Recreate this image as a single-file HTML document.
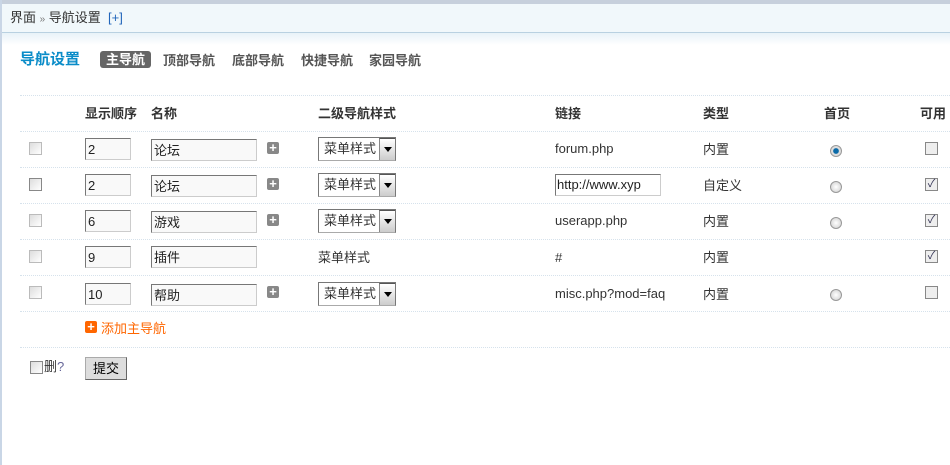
<!DOCTYPE html>
<html><head><meta charset="utf-8"><style>
*{margin:0;padding:0;box-sizing:border-box}
body{width:950px;height:465px;overflow:hidden;background:#fff;font-family:"Liberation Sans","Noto Sans CJK SC",sans-serif;font-size:12px;color:#333;position:relative;line-height:14px}
.lb{position:absolute;left:0;top:0;width:2px;height:465px;background:#c9d6e6}
.top{position:absolute;left:0;top:0;width:950px;height:4px;background:#c7d0dc}
.bar{position:absolute;left:2px;top:4px;width:948px;height:29px;background:#f1f8fb;border-bottom:1px solid #b9d1e1}
.bar span{position:absolute;left:8px;top:7px;color:#333;font-size:13px}
.grad{position:absolute;left:2px;top:33px;width:948px;height:12px;background:linear-gradient(#e8f2f8,#fff)}
.a{position:absolute;white-space:nowrap}
.h1{color:#0a8cc8;font-size:15px;font-weight:bold;line-height:18px}
.tab{font-weight:bold;color:#555;font-size:13px;line-height:16px}
.on{background:#666;color:#fff;border-radius:3px;padding:1px 6px}
.line{position:absolute;left:20px;width:930px;border-top:1px dotted #d6e2ec}
.cb{position:absolute;width:13px;height:13px;border:1px solid #bbb;background:linear-gradient(135deg,#ddd,#fff)}
.inp{position:absolute;height:22px;border:1px solid #aaa;border-top-color:#777;border-left-color:#777;border-bottom-color:#ccc;border-right-color:#ccc;background:#f9f9f9;padding:3px 2px;font-size:13px;line-height:16px;color:#222}
.plus{position:absolute;width:12px;height:12px;background:#888;border-radius:2px;color:#fff;font-size:13px;line-height:12px;text-align:center;font-weight:bold}
.sel{position:absolute;width:78px;height:24px;border:1px solid #777;border-bottom-color:#aaa;background:#fff;font-size:13px;line-height:16px;padding:3px 5px}
.sel i{position:absolute;right:0;top:0;width:16px;height:22px;border-left:1px solid #888;border-top:1px solid #555;background:linear-gradient(#fff,#ccc)}
.sel i:after{content:"";position:absolute;left:4px;top:8px;border:4px solid transparent;border-top:5px solid #000}
.rad{position:absolute;width:12px;height:12px;border-radius:50%;border:1px solid #999;background:radial-gradient(#fff,#ccc)}
.ck{position:absolute;width:13px;height:13px;border:1px solid #888;background:#eee;color:#335;font-size:11px;line-height:11px;text-align:center}
.th{font-weight:bold;color:#333;font-size:13px;line-height:16px}
.t{font-size:13px;line-height:16px}
</style></head><body>
<div class="top"></div><div class="bar"><span>界面 <span style="position:static;color:#777;font-size:10px">»</span> 导航设置 &nbsp;<span style="position:static;color:#2266bb">[+]</span></span></div>
<div class="grad"></div><div class="lb"></div>
<div class="a h1" style="left:20px;top:51px">导航设置</div>
<div class="a tab" style="left:100px;top:52px"><span class="on">主导航</span></div>
<div class="a tab" style="left:163px;top:53px">顶部导航</div>
<div class="a tab" style="left:232px;top:53px">底部导航</div>
<div class="a tab" style="left:301px;top:53px">快捷导航</div>
<div class="a tab" style="left:369px;top:53px">家园导航</div>
<div class="line" style="top:95px"></div>
<div class="a th" style="left:85px;top:106px">显示顺序</div>
<div class="a th" style="left:151px;top:106px">名称</div>
<div class="a th" style="left:318px;top:106px">二级导航样式</div>
<div class="a th" style="left:555px;top:106px">链接</div>
<div class="a th" style="left:703px;top:106px">类型</div>
<div class="a th" style="left:824px;top:106px">首页</div>
<div class="a th" style="left:920px;top:106px">可用</div>
<div class="line" style="top:131px"></div>

<div class="cb" style="left:29px;top:142px"></div>
<div class="inp" style="left:85px;top:138px;width:46px">2</div>
<div class="inp" style="left:151px;top:139px;width:106px">论坛</div>
<div class="plus" style="left:267px;top:142px">+</div>
<div class="sel" style="left:318px;top:137px">菜单样式<i></i></div>
<div class="a t" style="left:555px;top:141px">forum.php</div>
<div class="a t" style="left:703px;top:142px">内置</div>
<div class="rad" style="left:830px;top:145px;background:radial-gradient(#0a6aa8 35%,#ddd 45%)"></div>
<div class="ck" style="left:925px;top:142px"></div>
<div class="line" style="top:167px"></div>

<div class="cb" style="left:29px;top:178px;border-color:#888"></div>
<div class="inp" style="left:85px;top:174px;width:46px">2</div>
<div class="inp" style="left:151px;top:175px;width:106px">论坛</div>
<div class="plus" style="left:267px;top:178px">+</div>
<div class="sel" style="left:318px;top:173px">菜单样式<i></i></div>
<div class="inp" style="left:555px;top:174px;width:106px;background:#fff;padding:2px 1px">http://www.xyp</div>
<div class="a t" style="left:703px;top:178px">自定义</div>
<div class="rad" style="left:830px;top:181px"></div>
<div class="ck" style="left:925px;top:178px">✓</div>
<div class="line" style="top:203px"></div>

<div class="cb" style="left:29px;top:214px"></div>
<div class="inp" style="left:85px;top:210px;width:46px">6</div>
<div class="inp" style="left:151px;top:211px;width:106px">游戏</div>
<div class="plus" style="left:267px;top:214px">+</div>
<div class="sel" style="left:318px;top:209px">菜单样式<i></i></div>
<div class="a t" style="left:555px;top:213px">userapp.php</div>
<div class="a t" style="left:703px;top:214px">内置</div>
<div class="rad" style="left:830px;top:217px"></div>
<div class="ck" style="left:925px;top:214px">✓</div>
<div class="line" style="top:239px"></div>

<div class="cb" style="left:29px;top:250px"></div>
<div class="inp" style="left:85px;top:246px;width:46px">9</div>
<div class="inp" style="left:151px;top:246px;width:106px">插件</div>
<div class="a t" style="left:318px;top:250px">菜单样式</div>
<div class="a t" style="left:555px;top:250px">#</div>
<div class="a t" style="left:703px;top:250px">内置</div>
<div class="ck" style="left:925px;top:250px">✓</div>
<div class="line" style="top:275px"></div>

<div class="cb" style="left:29px;top:286px"></div>
<div class="inp" style="left:85px;top:283px;width:46px">10</div>
<div class="inp" style="left:151px;top:284px;width:106px">帮助</div>
<div class="plus" style="left:267px;top:286px">+</div>
<div class="sel" style="left:318px;top:282px">菜单样式<i></i></div>
<div class="a t" style="left:555px;top:286px">misc.php?mod=faq</div>
<div class="a t" style="left:703px;top:287px">内置</div>
<div class="rad" style="left:830px;top:289px"></div>
<div class="ck" style="left:925px;top:286px"></div>
<div class="line" style="top:311px"></div>
<div class="plus" style="left:85px;top:321px;background:#f60;width:12px;height:12px">+</div>
<div class="a t" style="left:101px;top:321px;color:#f60">添加主导航</div>
<div class="line" style="top:347px"></div>
<div class="cb" style="left:30px;top:361px;border-color:#888"></div>
<div class="a t" style="left:44px;top:359px">删<span style="color:#669">?</span></div>
<div class="a" style="left:85px;top:357px;width:42px;height:23px;background:#ddd;border:1px solid #aaa;border-right-color:#666;border-bottom-color:#666;text-align:center;line-height:21px;font-size:13px;color:#000">提交</div>
</body></html>
